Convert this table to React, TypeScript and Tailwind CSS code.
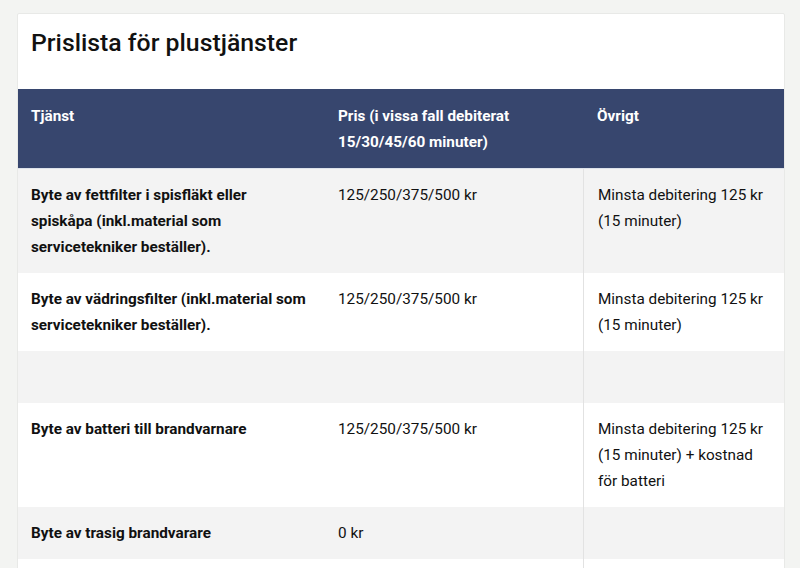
import React from "react";

type Row = { a: string; b: string; c: string; bg: string };

const rows: Row[] = [
  {
    a: "Byte av fettfilter i spisfläkt eller spiskåpa (inkl.material som servicetekniker beställer).",
    b: "125/250/375/500 kr",
    c: "Minsta debitering 125 kr (15 minuter)",
    bg: "bg-[#f3f3f3]",
  },
  {
    a: "Byte av vädringsfilter (inkl.material som servicetekniker beställer).",
    b: "125/250/375/500 kr",
    c: "Minsta debitering 125 kr (15 minuter)",
    bg: "bg-white",
  },
  { a: "", b: "", c: "", bg: "bg-[#f3f3f3]" },
  {
    a: "Byte av batteri till brandvarnare",
    b: "125/250/375/500 kr",
    c: "Minsta debitering 125 kr (15 minuter) + kostnad för batteri",
    bg: "bg-white",
  },
  {
    a: "Byte av trasig brandvarare",
    b: "0 kr",
    c: "",
    bg: "bg-[#f3f3f3]",
  },
  { a: "", b: "", c: "", bg: "bg-white" },
];

export default function App() {
  return (
    <div
      className="w-[800px] h-[568px] overflow-hidden bg-[#f3f4f2] pt-[13px] pl-[17px]"
      style={{ fontFamily: "Roboto, 'Liberation Sans', sans-serif" }}
    >
      <div className="w-[768px] bg-white border border-[#e8e9e7] rounded-[2px]">
        <div className="h-[75px] pl-[13px] pt-[13px]">
          <h1 className="text-[24.8px] leading-[32px] font-medium text-[#111]">
            Prislista för plustjänster
          </h1>
        </div>
        <div className="grid grid-cols-[306px_259px_1fr] bg-[#37466e] border-b border-[#dde2ea] text-white font-bold text-[15.3px] leading-[26px]">
          <div className="pl-[13px] pr-[14px] pt-[14px] pb-[13px] min-h-[79px]">Tjänst</div>
          <div className="pl-[14px] pr-[14px] pt-[14px] pb-[13px]">
            Pris (i vissa fall debiterat 15/30/45/60 minuter)
          </div>
          <div className="pl-[14px] pr-[14px] pt-[14px] pb-[13px]">Övrigt</div>
        </div>
        {rows.map((r, i) => (
          <div
            key={i}
            className={`grid grid-cols-[306px_259px_1fr] ${r.bg} text-[15.3px] leading-[26px] text-[#111]`}
          >
            <div className="pl-[13px] pr-[14px] py-[13px] font-bold min-h-[52px]">{r.a}</div>
            <div className="pl-[14px] pr-[14px] py-[13px]">{r.b}</div>
            <div className="pl-[14px] pr-[14px] py-[13px] border-l border-[#e2e2e2]">{r.c}</div>
          </div>
        ))}
      </div>
    </div>
  );
}
